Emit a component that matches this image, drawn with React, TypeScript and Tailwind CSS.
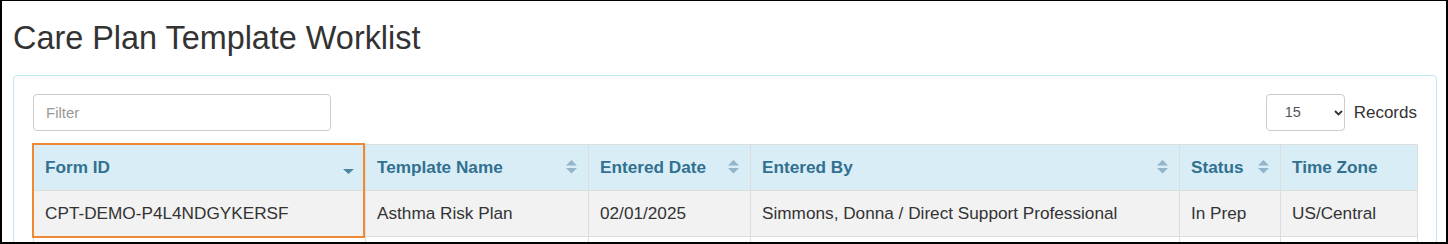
import React from 'react'

const columns = [
  { label: 'Form ID', width: 'w-[332px]', sort: 'desc' },
  { label: 'Template Name', width: 'w-[223px]', sort: 'both' },
  { label: 'Entered Date', width: 'w-[162px]', sort: 'both' },
  { label: 'Entered By', width: 'w-[429px]', sort: 'both' },
  { label: 'Status', width: 'w-[101px]', sort: 'both' },
  { label: 'Time Zone', width: 'w-[137px]', sort: 'none' },
]

// second row sits below the fold, only its cell borders show
const rows = [
  ['CPT-DEMO-P4L4NDGYKERSF', 'Asthma Risk Plan', '02/01/2025', 'Simmons, Donna / Direct Support Professional', 'In Prep', 'US/Central'],
  ['', '', '', '', '', ''],
]

function SortIcon({ kind }: { kind: string }) {
  if (kind === 'none') return null
  if (kind === 'desc') {
    return (
      <svg width="11" height="14" viewBox="0 0 11 14" className="shrink-0">
        <path d="M0 9 L11 9 L5.5 14 Z" fill="#4d84a4" />
      </svg>
    )
  }
  return (
    <svg width="11" height="14" viewBox="0 0 11 14" className="shrink-0">
      <path d="M5.5 0 L11 5.5 L0 5.5 Z" fill="#92b5c9" />
      <path d="M0 8 L11 8 L5.5 13.5 Z" fill="#92b5c9" />
    </svg>
  )
}

export default function App() {
  return (
    <div
      className="h-[244px] w-[1448px] overflow-hidden border-x-2 border-t border-b-2 border-black bg-white pl-[11px] pr-[9px]"
      style={{ fontFamily: '"Liberation Sans", Arial, sans-serif' }}
    >
      <h1 className="mt-[19px] text-[32.4px] leading-[36px] font-normal text-[#333]">Care Plan Template Worklist</h1>

      <div className="mt-[19px] rounded-[4px] border border-[#bce8f1] px-[19px] pt-[18px] pb-[19px]">
        {/* Filter + records selector */}
        <div className="flex items-center justify-between">
          <input
            type="text"
            placeholder="Filter"
            className="h-[37px] w-[298px] rounded-[4px] border border-[#ccc] px-[12px] text-[15px] text-[#555] placeholder:text-[#999] outline-none"
          />
          <div className="flex items-center gap-[9px]">
            <div className="relative h-[37px] w-[79px]">
              <select
                defaultValue="15"
                className="h-full w-full appearance-none rounded-[4px] border border-[#ccc] bg-white pl-[18px] text-[14.5px] text-[#555] outline-none"
              >
                <option>10</option>
                <option>15</option>
                <option>25</option>
                <option>50</option>
              </select>
              <svg width="9" height="6" viewBox="0 0 9 6" className="pointer-events-none absolute top-[16px] left-[68px]">
                <path d="M1 1 L4.5 4.5 L8 1" fill="none" stroke="#333" strokeWidth="1.8" />
              </svg>
            </div>
            <span className="text-[17px] text-[#333]">Records</span>
          </div>
        </div>

        {/* Worklist table */}
        <div className="relative mt-[13px]">
          <table className="w-full table-fixed border-collapse text-[17.2px]">
            <thead>
              <tr className="bg-[#d9edf7]">
                {columns.map(col => (
                  <th key={col.label} className={`${col.width} h-[46px] border border-[#ddd] px-[11px] text-left font-bold text-[#31708f]`}>
                    <div className="flex items-center justify-between">
                      <span>{col.label}</span>
                      <SortIcon kind={col.sort} />
                    </div>
                  </th>
                ))}
              </tr>
            </thead>
            <tbody>
              {rows.map((row, i) => (
                <tr key={i} className={i % 2 === 0 ? 'bg-[#f2f2f2]' : 'bg-white'}>
                  {row.map((cell, j) => (
                    <td key={j} className="h-[46px] border border-[#ddd] px-[11px] text-[#333] whitespace-nowrap">
                      {cell}
                    </td>
                  ))}
                </tr>
              ))}
            </tbody>
          </table>
          {/* focused cell highlight */}
          <div className="pointer-events-none absolute -top-px -left-px h-[95px] w-[333px] border-2 border-[#ef8a34]" />
        </div>
      </div>
    </div>
  )
}
